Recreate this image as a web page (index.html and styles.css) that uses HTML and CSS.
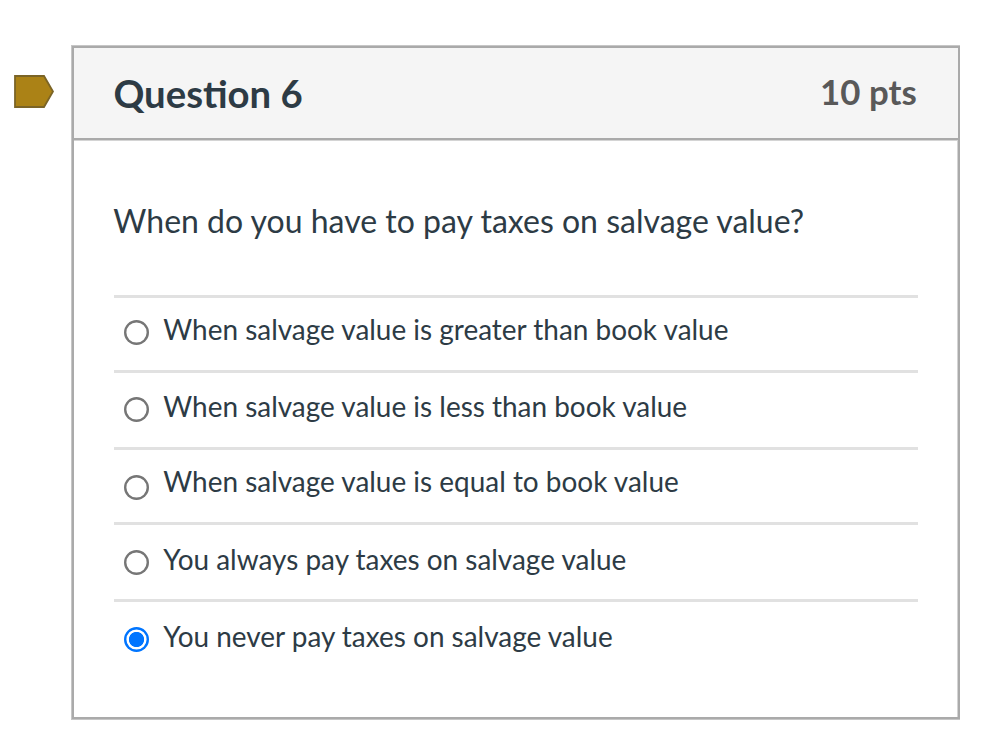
FILE: index.html
```html
<!DOCTYPE html>
<html lang="en">
<head>
<meta charset="utf-8">
<title>Question 6</title>
<link rel="stylesheet" href="styles.css">
</head>
<body>
<main class="page">
  <svg class="flag" viewBox="0 0 40 33" aria-hidden="true"><path d="M1 1H30L39 16.5L30 32H1Z"/></svg>
  <section class="question">
    <header class="header">
      <h1 class="title">Question 6</h1>
      <span class="points">10 pts</span>
    </header>
    <div class="body">
      <p class="prompt">When do you have to pay taxes on salvage value?</p>
      <div class="answers">
        <label class="answer a1"><span class="radio"></span><span class="text">When salvage value is greater than book value</span></label>
        <label class="answer a2"><span class="radio"></span><span class="text">When salvage value is less than book value</span></label>
        <label class="answer a3"><span class="radio"></span><span class="text">When salvage value is equal to book value</span></label>
        <label class="answer a4"><span class="radio"></span><span class="text">You always pay taxes on salvage value</span></label>
        <label class="answer a5"><span class="radio checked"></span><span class="text">You never pay taxes on salvage value</span></label>
      </div>
    </div>
  </section>
</main>
</body>
</html>
```
FILE: styles.css
```css
* { box-sizing: border-box; }
body { margin: 0; background: #fff; color: #2d3b45; font-family: Lato, sans-serif; }
.page { display: flex; align-items: flex-start; height: 748px; padding: 45px 28px 28px 14px; }
.flag { width: 40px; height: 33px; margin: 30px 17px 0 0; flex: none; fill: #ab8216; stroke: #7b6426; stroke-width: 1.8; }
.question { flex: 1; height: 675px; border: 1px solid #c6c6c6; border-right: 0; box-shadow: inset 2px 2px #aaa, inset -2px -2px #aaa, inset -3px 0 #d4d4d4; padding: 2px; }
.header { display: flex; justify-content: space-between; height: 93px; padding: 0 41.3px 0 39.4px; background: #f5f5f5; border-bottom: 1px solid #d4d4d4; box-shadow: inset 0 -2px #aaa; }
.title { margin: 0; padding-top: 22px; font-size: 38.3px; line-height: 46px; font-weight: 700; }
.points { padding-top: 23px; font-size: 34.8px; line-height: 42px; font-weight: 700; color: #595959; }
.body { padding: 58px 40px 0; }
.prompt { margin: 0 0 0 -0.7px; height: 96px; font-size: 32px; line-height: 44px; white-space: nowrap; }
.answer { display: flex; height: 75px; padding-left: 10px; border-top: 3px solid #e1e1e1; gap: 14.3px; }
.a2, .a4 { height: 77px; }
.radio { flex: none; width: 25px; height: 25px; margin-top: 22px; box-shadow: inset 0 0 0 2.4px #767676; border-radius: 50%; }
.a2 .radio { margin-top: 24.3px; }
.a3 .radio, .a4 .radio, .a5 .radio { margin-top: 25px; }
.radio.checked { box-shadow: inset 0 0 0 2.4px #0075ff; background: radial-gradient(circle, #0075ff 7.2px, #fff 8px); }
.text { padding-top: 13px; font-size: 27.95px; line-height: 36px; white-space: nowrap; }
.a2 .text { padding-top: 15px; }
.a4 .text, .a5 .text { padding-top: 16px; }
```
